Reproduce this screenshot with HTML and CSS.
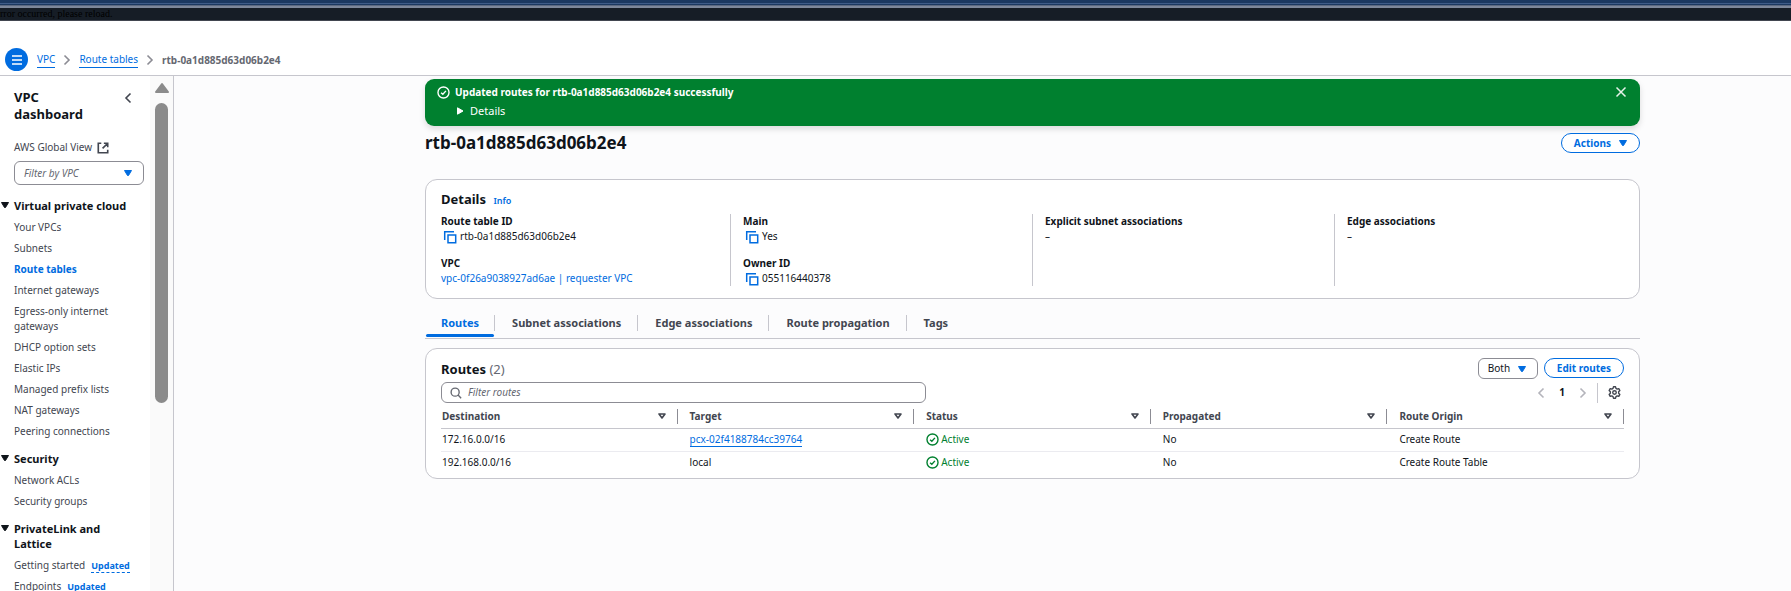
FILE: index.html
```html
<!DOCTYPE html>
<html lang="en">
<head>
<meta charset="utf-8">
<title>Route tables | VPC</title>
<link rel="stylesheet" href="styles.css">
</head>
<body>
<svg class="sprite" aria-hidden="true">
  <symbol id="copy" viewBox="0 0 14 14"><path d="M1.700 10V1.700H11M5 5h7.700v7.700H5z" fill="none" stroke="currentColor" stroke-width="1.500"/></symbol>
  <symbol id="check" viewBox="0 0 16 16"><circle cx="8" cy="8" r="6.800" fill="none" stroke="currentColor" stroke-width="1.700"/><path d="M5 8.200l2.200 2L11 6" fill="none" stroke="currentColor" stroke-width="1.700"/></symbol>
  <symbol id="down" viewBox="0 0 10 8"><path d="M1.500 1.500h7L5.500 6.500h-1z" fill="currentColor" stroke="currentColor" stroke-linejoin="round"/></symbol>
  <symbol id="sort" viewBox="0 0 10 8"><path d="M2 2h6L5 6z" fill="none" stroke="currentColor" stroke-width="1.600" stroke-linejoin="round"/></symbol>
  <symbol id="left" viewBox="0 0 8 12"><path d="M6.500 1.500L2 6l4.500 4.500" fill="none" stroke="currentColor" stroke-width="1.600"/></symbol>
  <symbol id="right" viewBox="0 0 8 12"><path d="M1.500 1.500L6 6l-4.500 4.500" fill="none" stroke="currentColor" stroke-width="1.600"/></symbol>
</svg>
<div class="strip"></div>
<div class="topbar">rror occurred, please reload.</div>
<header class="crumbbar">
  <button class="menu" aria-label="Open menu"><svg viewBox="0 0 12 12" width="12" height="12"><path d="M1 2h10M1 6h10M1 10h10" stroke="#fff" stroke-width="1.500"/></svg></button>
  <nav class="crumbs" aria-label="Breadcrumbs">
    <a href="#">VPC</a><svg class="chev"><use href="#right"/></svg>
    <a href="#">Route tables</a><svg class="chev"><use href="#right"/></svg>
    <span>rtb-0a1d885d63d06b2e4</span>
  </nav>
</header>
<div class="app">
  <aside class="side">
    <nav class="nav" aria-label="VPC navigation">
      <div class="nav-head"><h2>VPC dashboard</h2><button class="plain" aria-label="Close navigation"><svg class="chev"><use href="#left"/></svg></button></div>
      <a class="global" href="#">AWS Global View <svg viewBox="0 0 14 14" width="12" height="12"><path d="M5 1.500H1.500v11h11V9M8 1.500h4.500V6M12.500 1.500L6.500 7.500" fill="none" stroke="currentColor" stroke-width="1.900"/></svg></a>
      <div class="select filter"><select aria-label="Filter by VPC"><option>Filter by VPC</option></select><svg class="tri"><use href="#down"/></svg></div>
      <section>
        <h3><svg class="fold"><use href="#down"/></svg>Virtual private cloud</h3>
        <ul>
          <li><a href="#">Your VPCs</a></li><li><a href="#">Subnets</a></li><li><a class="current" href="#">Route tables</a></li><li><a href="#">Internet gateways</a></li><li><a href="#">Egress-only internet gateways</a></li><li><a href="#">DHCP option sets</a></li><li><a href="#">Elastic IPs</a></li><li><a href="#">Managed prefix lists</a></li><li><a href="#">NAT gateways</a></li><li><a href="#">Peering connections</a></li>
        </ul>
      </section>
      <section>
        <h3><svg class="fold"><use href="#down"/></svg>Security</h3>
        <ul><li><a href="#">Network ACLs</a></li><li><a href="#">Security groups</a></li></ul>
      </section>
      <section>
        <h3><svg class="fold"><use href="#down"/></svg>PrivateLink and Lattice</h3>
        <ul><li><a href="#">Getting started</a><a class="tag" href="#">Updated</a></li><li><a href="#">Endpoints</a><a class="tag" href="#">Updated</a></li></ul>
      </section>
    </nav>
    <div class="track" aria-hidden="true"><svg viewBox="0 0 16 12" width="16" height="12"><path d="M8 2L14 10H2z" fill="#8b8b8b" stroke="#8b8b8b" stroke-width="2" stroke-linejoin="round"/></svg><div class="thumb"></div></div>
  </aside>
  <main>
    <div class="flash" role="status">
      <svg class="ic"><use href="#check"/></svg>
      <div class="flash-text"><strong>Updated routes for rtb-0a1d885d63d06b2e4 successfully</strong>
        <button class="plain more"><svg viewBox="0 0 8 8" width="8" height="8"><path d="M1.500 .8v6.400L7 4z" fill="#fff" stroke="#fff" stroke-linejoin="round"/></svg>Details</button></div>
      <button class="plain close" aria-label="Dismiss"><svg viewBox="0 0 12 12" width="12" height="12"><path d="M1.500 1.500l9 9M10.500 1.500l-9 9" stroke="#e6f2ea" stroke-width="1.500"/></svg></button>
    </div>
    <div class="title"><h1>rtb-0a1d885d63d06b2e4</h1><button class="pill">Actions<svg class="tri"><use href="#down"/></svg></button></div>
    <section class="card details">
      <h2>Details <a class="info" href="#">Info</a></h2>
      <div class="grid">
        <dl><div><dt>Route table ID</dt><dd class="copy"><svg><use href="#copy"/></svg>rtb-0a1d885d63d06b2e4</dd></div><div><dt>VPC</dt><dd><a href="#">vpc-0f26a9038927ad6ae | requester VPC</a></dd></div></dl>
        <dl><div><dt>Main</dt><dd class="copy"><svg><use href="#copy"/></svg>Yes</dd></div><div><dt>Owner ID</dt><dd class="copy"><svg><use href="#copy"/></svg>055116440378</dd></div></dl>
        <dl><div><dt>Explicit subnet associations</dt><dd>–</dd></div></dl>
        <dl><div><dt>Edge associations</dt><dd>–</dd></div></dl>
      </div>
    </section>
    <div class="tabs" role="tablist">
      <button role="tab" aria-selected="true">Routes</button><button role="tab">Subnet associations</button><button role="tab">Edge associations</button><button role="tab">Route propagation</button><button role="tab">Tags</button>
    </div>
    <section class="card routes">
      <div class="bar">
        <h2>Routes <span>(2)</span></h2>
        <div class="actions"><div class="select both"><select aria-label="Route type"><option>Both</option></select><svg class="tri"><use href="#down"/></svg></div><button class="pill">Edit routes</button></div>
      </div>
      <div class="bar tools">
        <label class="search"><svg viewBox="0 0 14 14" width="12" height="12"><circle cx="6" cy="6" r="4.700" fill="none" stroke="currentColor" stroke-width="1.600"/><path d="M9.400 9.400L13 13" stroke="currentColor" stroke-width="1.600"/></svg><input type="search" placeholder="Filter routes" aria-label="Filter routes"></label>
        <div class="pager"><button class="plain" aria-label="Previous page" disabled><svg class="chev"><use href="#left"/></svg></button><button class="plain page">1</button><button class="plain" aria-label="Next page" disabled><svg class="chev"><use href="#right"/></svg></button>
          <button class="plain gear" aria-label="Preferences"><svg viewBox="0 0 16 16" width="13" height="13"><path d="M6.700 1h2.600l.5 2 1.500.9 2-.6 1.300 2.300-1.500 1.500v1.800l1.500 1.500-1.300 2.300-2-.6-1.500.9-.5 2H6.700l-.5-2-1.500-.9-2 .6-1.300-2.300 1.500-1.500V7.100L1.400 5.600l1.300-2.300 2 .6L6.200 3z" fill="none" stroke="currentColor" stroke-width="1.700" stroke-linejoin="round"/><circle cx="8" cy="8" r="2.200" fill="none" stroke="currentColor" stroke-width="1.700"/></svg></button></div>
      </div>
      <table>
        <thead><tr>
          <th scope="col"><div>Destination<svg class="sort"><use href="#sort"/></svg></div></th><th scope="col"><div>Target<svg class="sort"><use href="#sort"/></svg></div></th><th scope="col"><div>Status<svg class="sort"><use href="#sort"/></svg></div></th><th scope="col"><div>Propagated<svg class="sort"><use href="#sort"/></svg></div></th><th scope="col"><div>Route Origin<svg class="sort"><use href="#sort"/></svg></div></th>
        </tr></thead>
        <tbody>
          <tr><td>172.16.0.0/16</td><td><a class="under" href="#">pcx-02f4188784cc39764</a></td><td><span class="ok"><svg class="ic"><use href="#check"/></svg>Active</span></td><td>No</td><td>Create Route</td></tr>
          <tr><td>192.168.0.0/16</td><td>local</td><td><span class="ok"><svg class="ic"><use href="#check"/></svg>Active</span></td><td>No</td><td>Create Route Table</td></tr>
        </tbody>
      </table>
    </section>
  </main>
</div>
</body>
</html>
```
FILE: styles.css
```css
:root {
  --blue: #006ce0;
  --text: #0f141a;
  --muted: #424650;
  --line: #c6c6cd;
  --control: #8c8c94;
  --green: #00802f;
}
* { box-sizing: border-box; }
body {
  margin: 0;
  height: 100vh;
  overflow: hidden;
  display: flex;
  flex-direction: column;
  font: 10px/15px "Noto Sans", "Open Sans", sans-serif;
  color: var(--text);
  background: #fff;
}
h1, h2, h3, ul, dl, dd { margin: 0; padding: 0; }
ul { list-style: none; }
svg { flex: none; display: block; }
.sprite { position: absolute; width: 0; height: 0; }
button, input, select { font: inherit; color: inherit; }
button { cursor: pointer; }
.plain { border: 0; background: none; padding: 0; }
a { color: var(--blue); text-decoration: none; }
.chev { width: 8px; height: 12px; }
.tri { width: 10px; height: 8px; color: var(--blue); }
.ic { width: 13px; height: 13px; }

.strip {
  flex: none;
  height: 8px;
  background: linear-gradient(#1b3860 3px, #3f5c88 3px, #3f5c88 4px, #1b3860 4px, #1b3860 5px, #5b6880 5px, #5b6880 6px, #7d879a 6px);
}
.topbar {
  flex: none;
  height: 13px;
  background: #161d26;
  border-bottom: 1px solid #424650;
  color: #000;
  font: 10px/12px "Liberation Serif", serif;
}
.crumbbar {
  flex: none;
  display: flex;
  align-items: flex-end;
  gap: 9px;
  height: 55px;
  padding: 0 5px 4px;
  border-bottom: 1px solid var(--line);
}
.menu {
  display: grid;
  place-items: center;
  width: 23px;
  height: 23px;
  padding: 0;
  border: 0;
  border-radius: 50%;
  background: var(--blue);
}
.crumbs { display: flex; align-items: center; gap: 8px; height: 22px; }
.crumbs a, .under { border-bottom: 1px solid var(--blue); }
.crumbs .chev { color: var(--control); }
.crumbs span { color: #656871; font-weight: 700; }

.app { flex: 1; min-height: 0; display: flex; background: #fcfcfd; }
.side {
  flex: none;
  display: flex;
  width: 174px;
  border-right: 1px solid var(--line);
  background: #fff;
}
.nav { flex: 1; min-width: 0; padding: 13px 6px 0 14px; overflow: hidden; color: var(--muted); }
.nav-head { display: flex; justify-content: space-between; align-items: flex-start; padding-right: 12px; }
.nav-head h2 { width: 80px; font-size: 13px; line-height: 17px; color: var(--text); }
.nav-head button { height: 17px; }
.nav a { color: var(--muted); }
.nav .global { display: flex; align-items: center; gap: 5px; margin-top: 17px; }
.select { position: relative; display: flex; }
.select select {
  appearance: none;
  width: 100%;
  border: 1px solid var(--control);
  border-radius: 6px;
  background: #fff;
}
.select .tri { position: absolute; right: 11px; top: calc(50% - 4px); pointer-events: none; }
.filter { margin-top: 6px; }
.filter select { height: 24px; padding: 0 9px; font-style: italic; color: #656871; }
.nav section { margin-top: 12px; }
.nav .filter + section { margin-top: 13px; }
.nav h3 { position: relative; width: 120px; margin-bottom: 7px; font-size: 11px; color: var(--text); }
.fold { position: absolute; left: -14px; top: 3px; width: 10px; height: 8px; }
.nav li + li { margin-top: 6px; }
.nav .current { color: var(--blue); font-weight: 700; }
.nav .tag { margin-left: 6px; color: var(--blue); font-size: 9px; font-weight: 700; border-bottom: 1px dashed var(--blue); }
.track { flex: none; width: 23px; padding-top: 6px; background: #fafafa; display: flex; flex-direction: column; align-items: center; gap: 9px; }
.thumb { width: 13px; height: 59%; border-radius: 7px; background: #8b8b8b; }

main { flex: 1; min-width: 0; padding: 3px 151px 0 251px; }
.flash {
  display: flex;
  gap: 5px;
  padding: 6px 13px 6px 12px;
  min-height: 47px;
  border-radius: 9px;
  background: var(--green);
  color: #fff;
  box-shadow: 0 3px 6px #0002;
}
.flash .ic { margin-top: 1px; }
.flash-text { flex: 1; }
.flash strong { display: block; }
.more { display: flex; align-items: center; gap: 6px; margin: 3px 0 0 1px; font-size: 11px; }
.close { height: 14px; }
.title { display: flex; justify-content: space-between; align-items: center; margin-top: 6px; }
h1 { font-size: 17px; line-height: 22px; }
.pill {
  display: flex;
  align-items: center;
  gap: 7px;
  height: 20px;
  padding: 0 12px;
  border: 1px solid var(--blue);
  border-radius: 10px;
  background: #fff;
  color: var(--blue);
  font-weight: 700;
}
.title .pill { padding-right: 11px; }
.card { border: 1px solid var(--line); border-radius: 12px; background: #fff; padding: 0 15px; }
.card h2 { font-size: 13px; line-height: 20px; }
.info { font-size: 9px; font-weight: 600; margin-left: 4px; }
.details { margin-top: 25px; padding-top: 9px; padding-bottom: 12px; }
.grid { display: grid; grid-template-columns: repeat(4, 1fr); gap: 25px; margin-top: 3px; }
.grid dl { display: flex; flex-direction: column; gap: 12px; min-height: 72px; }
.grid dl + dl { margin-left: -13px; padding-left: 12px; border-left: 1px solid var(--line); }
dt { font-weight: 700; }
.copy { display: flex; align-items: center; gap: 3px; padding-left: 2px; }
.copy svg { width: 14px; height: 14px; color: var(--blue); }

.tabs { display: flex; margin-top: 12px; padding-bottom: 1px; border-bottom: 1px solid var(--line); }
.tabs button {
  position: relative;
  height: 26px;
  padding: 0 16px 4px 18px;
  border: 0;
  background: none;
  color: var(--muted);
  font-size: 11px;
  font-weight: 700;
}
.tabs button + button::before { content: ""; position: absolute; left: 0; top: 4px; height: 16px; border-left: 1px solid var(--line); }
.tabs [aria-selected] { color: var(--blue); padding: 0 15px 4px 16px; }
.tabs [aria-selected]::after { content: ""; position: absolute; left: 1px; right: 0; bottom: 0; height: 3px; border-radius: 2px; background: var(--blue); }

.routes { margin-top: 9px; padding-top: 9px; padding-bottom: 4px; }
.bar { display: flex; justify-content: space-between; align-items: center; }
.bar h2 span { color: #656871; font-weight: 400; }
.actions { display: flex; gap: 6px; }
.both { width: 60px; }
.both select { height: 21px; padding: 0 9px; }
.actions .pill { padding: 0 12px; }
.tools { margin-top: 3px; }
.search {
  display: flex;
  align-items: center;
  gap: 6px;
  width: 41%;
  height: 21px;
  padding: 0 8px;
  border: 1px solid var(--control);
  border-radius: 6px;
  color: #656871;
}
.search input { flex: 1; min-width: 0; border: 0; padding: 0; outline: 0; background: none; }
.search input::placeholder { color: #656871; font-style: italic; opacity: 1; }
.pager { display: flex; align-items: center; gap: 14px; color: var(--muted); }
.pager :disabled { color: #b4b4bb; }
.page { font-weight: 700; color: var(--text); }
.gear { height: 20px; padding: 0 3px 0 10px; border-left: 1px solid var(--line); margin-left: -4px; }

table { width: 100%; margin-top: 2px; border-collapse: collapse; table-layout: fixed; }
th, td { text-align: left; padding: 0 0 0 12px; height: 23px; }
th:first-child, td:first-child { padding-left: 1px; }
th { color: var(--muted); border-bottom: 1px solid var(--line); }
th div { display: flex; justify-content: space-between; align-items: center; height: 15px; padding-right: 10px; border-right: 1px solid var(--control); }
.sort { width: 10px; height: 8px; }
tbody tr + tr td { border-top: 1px solid #ebebf0; }
.ok { display: flex; align-items: center; gap: 2px; color: var(--green); }
```
